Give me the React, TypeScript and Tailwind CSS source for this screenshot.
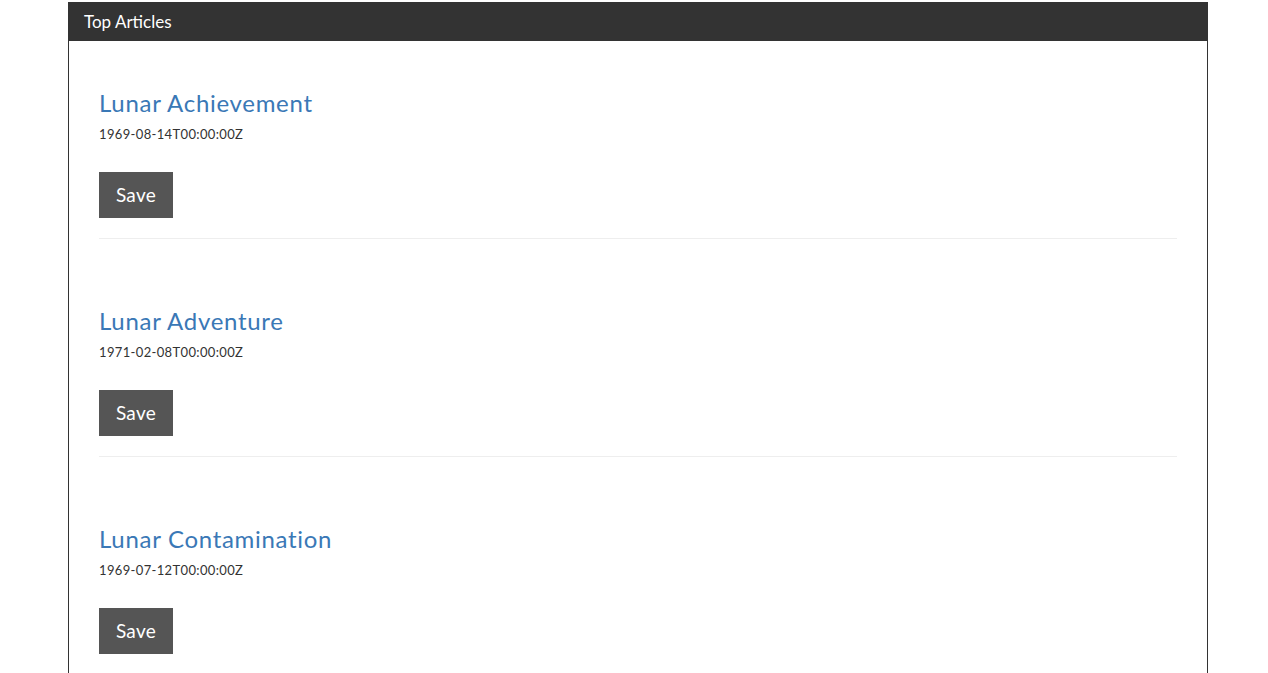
const ARTICLES = [
  { title: "Lunar Achievement", date: "1969-08-14T00:00:00Z" },
  { title: "Lunar Adventure", date: "1971-02-08T00:00:00Z" },
  { title: "Lunar Contamination", date: "1969-07-12T00:00:00Z" },
];

export default function App() {
  return (
    <div className="min-h-[673px] bg-white pt-[2px] font-['Lato',sans-serif] text-[#333]">
      <div className="ml-[68px] w-[1140px] border-x border-[#333]">
        {/* header */}
        <div className="flex h-[39px] items-center bg-[#333] px-[15px] text-[17px] text-white">
          Top Articles
        </div>

        <div className="px-[30px] pt-[49px]">
          {ARTICLES.map((a) => (
            <div key={a.title} className="mb-[69px] border-b border-[#eee] pb-[20px]">
              <h3 className="text-[24px] leading-[26px] tracking-[0.7px] text-[#3a78b6]">{a.title}</h3>
              <p className="mt-[8px] text-[13px] leading-[20px] tracking-[0.35px]">{a.date}</p>
              <button className="mt-[28px] h-[46px] w-[74px] bg-[#555] text-[19px] tracking-[0.3px] text-white">
                Save
              </button>
            </div>
          ))}
        </div>
      </div>
    </div>
  );
}
